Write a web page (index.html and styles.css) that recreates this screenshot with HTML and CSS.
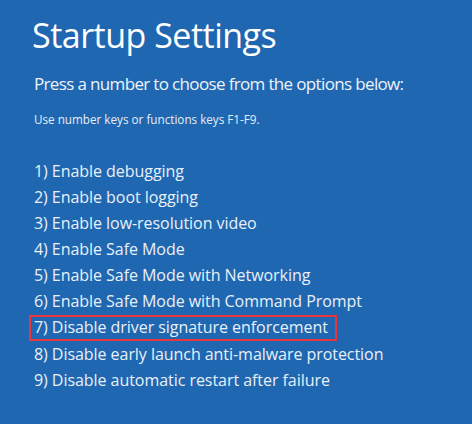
FILE: index.html
```html
<!doctype html>
<html lang="en">
  <head>
    <meta charset="UTF-8" />
    <meta name="viewport" content="width=device-width, initial-scale=1.0" />
    <title>Startup Settings</title>
    <link rel="stylesheet" href="styles.css">
  </head>
  <body>
    <main class="screen">
      <h1>Startup Settings</h1>
      <p class="lead">Press a number to choose from the options below:</p>
      <p class="hint">Use number keys or functions keys F1-F9.</p>
      <ol class="options">
        <li>1) Enable debugging</li>
        <li>2) Enable boot logging</li>
        <li>3) Enable low-resolution video</li>
        <li>4) Enable Safe Mode</li>
        <li>5) Enable Safe Mode with Networking</li>
        <li>6) Enable Safe Mode with Command Prompt</li>
        <li class="marked">7) Disable driver signature enforcement</li>
        <li>8) Disable early launch anti-malware protection</li>
        <li>9) Disable automatic restart after failure</li>
      </ol>
    </main>
  </body>
</html>
```

FILE: styles.css
```css
* {
  box-sizing: border-box;
}

html,
body {
  margin: 0;
  height: 100%;
}

body {
  background: #1f67b1;
  color: #fff;
  font-family: "Open Sans", "Noto Sans", sans-serif;
}

.screen {
  display: flex;
  flex-direction: column;
  padding: 11px 0 0 32px;
}

h1 {
  margin: 0;
  font-size: 34px;
  font-weight: 400;
  letter-spacing: -0.5px;
  line-height: 48px;
}

.lead {
  margin: 13px 0 0 2px;
  font-size: 17px;
  letter-spacing: -0.65px;
  line-height: 24px;
  color: #eef3f9;
}

.hint {
  margin: 15px 0 0 2px;
  font-size: 11.7px;
  line-height: 16px;
  color: #e6edf6;
}

.options {
  list-style: none;
  margin: 31px 0 0 0;
  padding: 0;
  display: flex;
  flex-direction: column;
  font-size: 16px;
  letter-spacing: -0.05px;
  color: #eaf0f8;
}

.options li {
  line-height: 26.1px;
  padding-left: 2px;
}

.options .marked {
  align-self: flex-start;
  width: 308px;
  margin-left: -3px;
  padding: 0 0 2px 3px;
  border: 2px solid #e8363a;
  line-height: 20.1px;
}
```
